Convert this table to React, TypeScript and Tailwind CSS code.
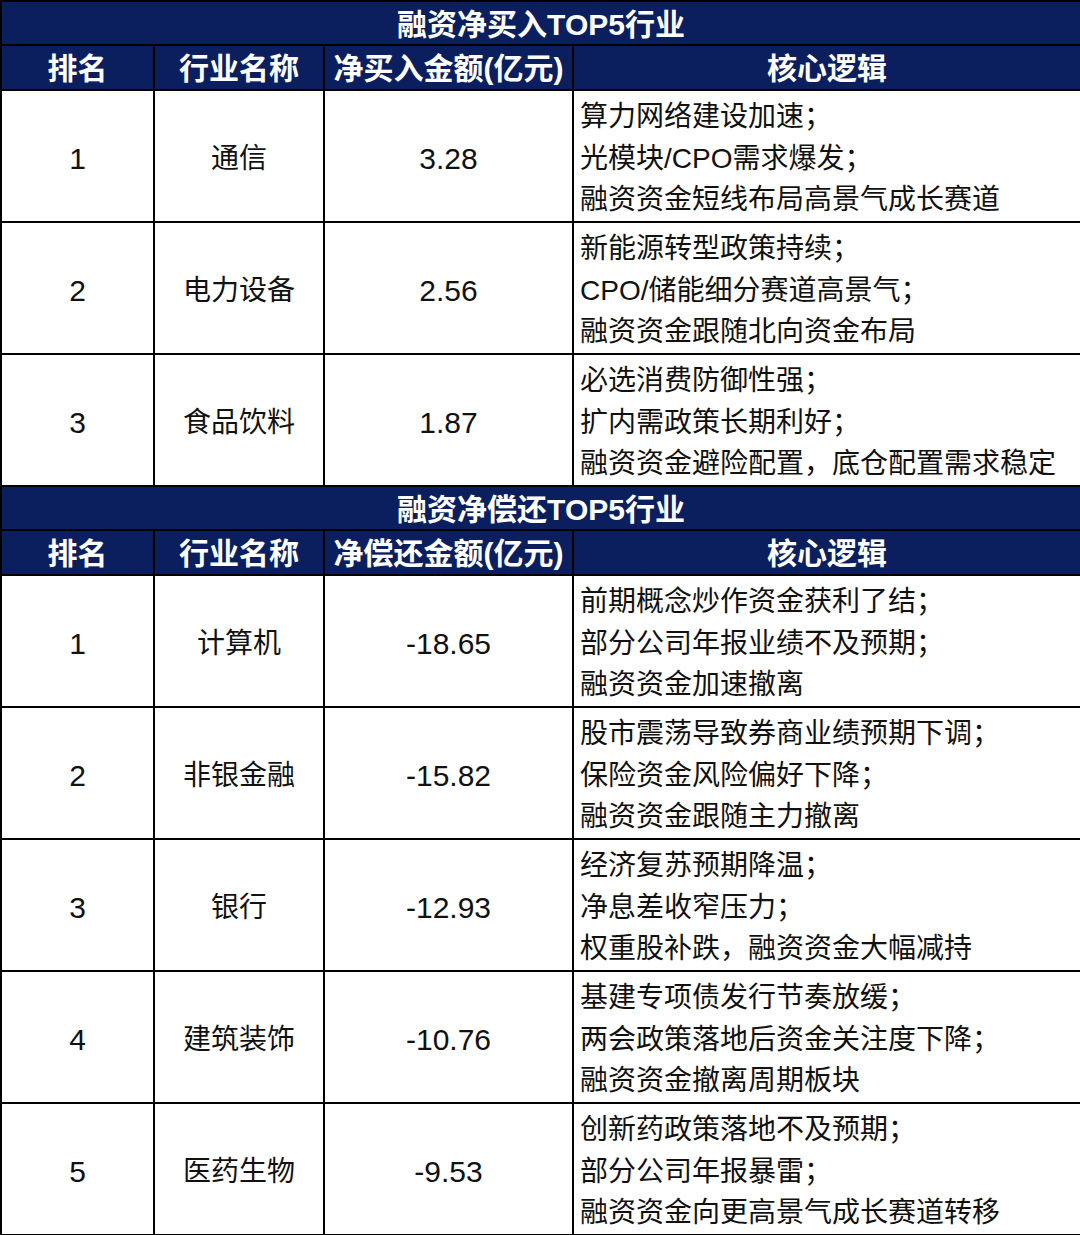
const buyRows = [
  { rank: "1", name: "通信", amount: "3.28", logic: ["算力网络建设加速；", "光模块/CPO需求爆发；", "融资资金短线布局高景气成长赛道"] },
  { rank: "2", name: "电力设备", amount: "2.56", logic: ["新能源转型政策持续；", "CPO/储能细分赛道高景气；", "融资资金跟随北向资金布局"] },
  { rank: "3", name: "食品饮料", amount: "1.87", logic: ["必选消费防御性强；", "扩内需政策长期利好；", "融资资金避险配置，底仓配置需求稳定"] },
];

const repayRows = [
  { rank: "1", name: "计算机", amount: "-18.65", logic: ["前期概念炒作资金获利了结；", "部分公司年报业绩不及预期；", "融资资金加速撤离"] },
  { rank: "2", name: "非银金融", amount: "-15.82", logic: ["股市震荡导致券商业绩预期下调；", "保险资金风险偏好下降；", "融资资金跟随主力撤离"] },
  { rank: "3", name: "银行", amount: "-12.93", logic: ["经济复苏预期降温；", "净息差收窄压力；", "权重股补跌，融资资金大幅减持"] },
  { rank: "4", name: "建筑装饰", amount: "-10.76", logic: ["基建专项债发行节奏放缓；", "两会政策落地后资金关注度下降；", "融资资金撤离周期板块"] },
  { rank: "5", name: "医药生物", amount: "-9.53", logic: ["创新药政策落地不及预期；", "部分公司年报暴雷；", "融资资金向更高景气成长赛道转移"] },
];

type Row = { rank: string; name: string; amount: string; logic: string[] };

function Section({ title, amountLabel, rows }: { title: string; amountLabel: string; rows: Row[] }) {
  return (
    <>
      <tr className="h-[44px] bg-[#0b1f5e] text-white">
        <td colSpan={4} className="border-2 border-black pt-[4px] text-center text-[30px] font-bold leading-none">
          {title}
        </td>
      </tr>
      <tr className="h-[45px] bg-[#0b1f5e] text-white text-[30px] font-bold leading-none">
        <td className="border-2 border-black pt-[2px] text-center">排名</td>
        <td className="border-2 border-black pt-[2px] text-center">行业名称</td>
        <td className="border-2 border-black pt-[2px] text-center">{amountLabel}</td>
        <td className="border-2 border-black pt-[2px] text-center">核心逻辑</td>
      </tr>
      {rows.map((r) => (
        <tr key={r.rank} className="h-[132px] text-[28px] text-[#111]">
          <td className="border-2 border-black pt-[5px] text-center text-[30px]">{r.rank}</td>
          <td className="border-2 border-black pt-[5px] text-center">{r.name}</td>
          <td className="border-2 border-black pt-[5px] text-center text-[30px]">{r.amount}</td>
          <td className="border-2 border-black pl-[6px] pt-[5px] leading-[41.5px]">
            {r.logic.map((l) => (
              <div key={l} className="whitespace-nowrap">{l}</div>
            ))}
          </td>
        </tr>
      ))}
    </>
  );
}

export default function App() {
  return (
    <div className="w-[1080px] h-[1235px] bg-white overflow-hidden font-['Liberation_Sans','Noto_Sans_CJK_SC',sans-serif]">
      <table className="w-[1080px] table-fixed border-collapse border-t-2 border-t-[#8a8f9c]">
        <colgroup>
          <col className="w-[153px]" />
          <col className="w-[170px]" />
          <col className="w-[249px]" />
          <col className="w-[508px]" />
        </colgroup>
        <tbody>
          <Section title="融资净买入TOP5行业" amountLabel="净买入金额(亿元)" rows={buyRows} />
          <Section title="融资净偿还TOP5行业" amountLabel="净偿还金额(亿元)" rows={repayRows} />
        </tbody>
      </table>
    </div>
  );
}
